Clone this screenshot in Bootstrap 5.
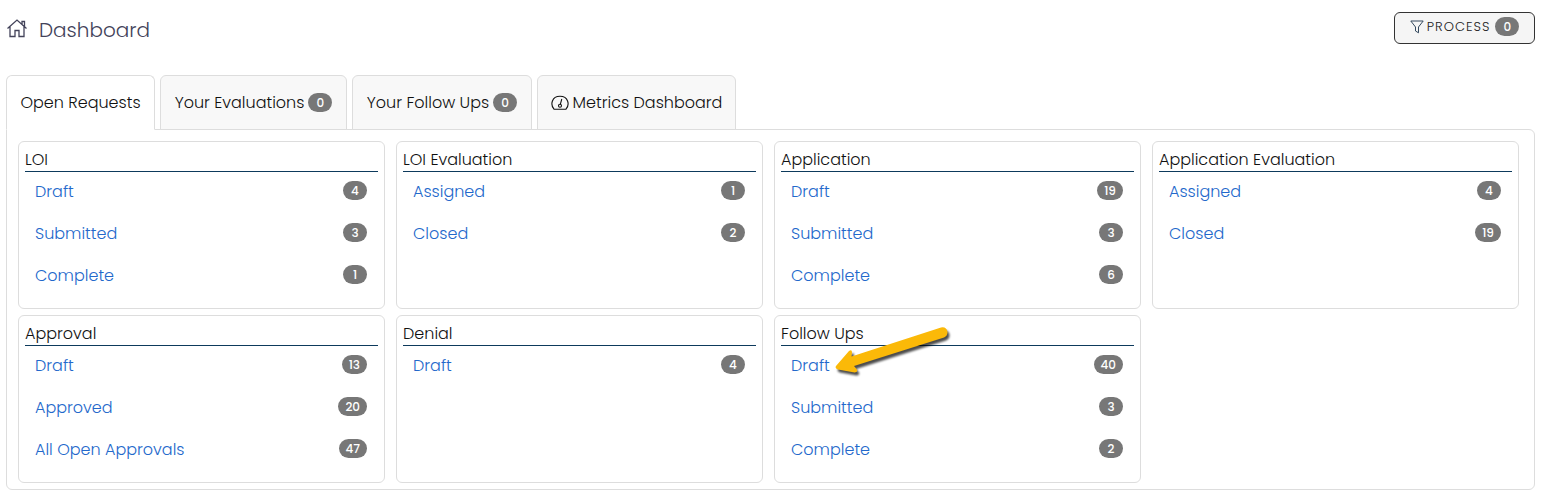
<!DOCTYPE html>
<html lang="en">
<head>
<meta charset="utf-8">
<meta name="viewport" content="width=device-width, initial-scale=1">
<title>Dashboard</title>
<link href="https://cdn.jsdelivr.net/npm/bootstrap@5.3.0/dist/css/bootstrap.min.css" rel="stylesheet">
<style>
  body { font-family: Poppins, Inter, "Open Sans", sans-serif; font-size: 16px; font-weight: 300; line-height: 24px; color: #111; background: #fff; }
  .page { padding: 12px 12px 9px 6px; }
  .page-head { height: 32px; margin-bottom: 31px; }
  .page-title { font-size: 20px; line-height: 32px; font-weight: 300; color: #43435a; padding: 2px 0 0 3px; }
  .count { min-width: 24px; padding: 0 7px; border-radius: 10px; background: #777; color: #fff; font-size: 12px; line-height: 19px; font-weight: 500; text-align: center; }
  .btn-process { height: 32px; width: 141px; padding: 0 0 3px; border: 1px solid #333; border-radius: 6px; background: #f5f5f5; color: #222; font-size: 13px; font-weight: 300; letter-spacing: 1px; line-height: 20px; }
  .btn-process svg { margin-right: 3px; }
  .btn-process .count { letter-spacing: 0; margin-left: 5px; }
  .request-tabs { border: 0; gap: 5px; }
  .request-tabs .nav-link { height: 55px; padding: 0 8px; border: 1px solid #ddd; border-radius: 6px 6px 0 0; background: #f8f8f8; color: #111; margin-bottom: -1px; }
  .request-tabs .nav-link.active { background: #fff; border-color: #ddd #ddd #fff; color: #111; }
  .tab-short { min-width: 149px; }
  .tab-mid { min-width: 180px; }
  .tab-long { min-width: 187px; }
  .tab-wide { min-width: 199px; }
  .panel { border: 1px solid #ddd; border-radius: 0 6px 6px 6px; padding: 11px 15px 6px 11px; }
  .panel .row { --bs-gutter-x: 11px; --bs-gutter-y: 6px; }
  .stage { height: 168px; border: 1px solid #ddd; border-radius: 6px; padding: 6px; }
  .stage h2 { margin: 0; font-size: 16px; font-weight: 300; line-height: 23px; border-bottom: 1px solid #0d3a5c; }
  .stage ul { padding: 0 11px 0 10px; margin: 0; }
  .stage li { height: 42px; padding-top: 8px; }
  .stage a { color: #2368cb; text-decoration: none; }
  .stage .count { margin-top: 1px; }
  .pointer { position: absolute; left: 39px; top: -24px; pointer-events: none; }
</style>
</head>
<body>
<main class="page">
  <header class="page-head d-flex justify-content-between align-items-start">
    <div class="d-flex align-items-center">
      <svg width="22" height="22" viewBox="0 0 22 22" class="me-2" fill="none" stroke="#43435a" stroke-width="1.300" aria-hidden="true"><path d="M1.500 10.500 11 2l9.500 8.500M4 8.500V18.500h5v-6h4v6h5V8.500M16 6.300V3.500h2.500v5"/></svg>
      <h1 class="page-title m-0">Dashboard</h1>
    </div>
    <button type="button" class="btn btn-process d-flex align-items-center justify-content-center">
      <svg width="14" height="14" viewBox="0 0 14 14" fill="none" stroke="#34495e" aria-hidden="true"><path d="M.8 1h12.400L8.500 7v5.800L5.500 11V7z"/></svg>
      <span>PROCESS</span><span class="count">0</span>
    </button>
  </header>

  <ul class="nav nav-tabs request-tabs">
    <li class="nav-item tab-short"><a href="#" class="nav-link active d-flex align-items-center justify-content-center" aria-current="page">Open Requests</a></li>
    <li class="nav-item tab-long"><a href="#" class="nav-link d-flex align-items-center justify-content-center gap-1">Your Evaluations <span class="count">0</span></a></li>
    <li class="nav-item tab-mid"><a href="#" class="nav-link d-flex align-items-center justify-content-center gap-1">Your Follow Ups <span class="count">0</span></a></li>
    <li class="nav-item tab-wide"><a href="#" class="nav-link d-flex align-items-center justify-content-center gap-1"><svg width="18" height="16" viewBox="0 0 18 16" fill="none" stroke="#111" stroke-width="1.100" aria-hidden="true"><path d="M3 14.200C-1 9.500.8 1.200 9 1.200S19 9.500 15 14.200zM9.300 9.300l1.500-5.300"/><circle cx="9" cy="10.800" r="1.500"/></svg>Metrics Dashboard</a></li>
  </ul>

  <section class="panel">
    <div class="row row-cols-4">
      <div class="col"><div class="stage"><h2>LOI</h2><ul class="list-unstyled">
        <li class="d-flex justify-content-between align-items-start"><a href="#">Draft</a><span class="count">4</span></li>
        <li class="d-flex justify-content-between align-items-start"><a href="#">Submitted</a><span class="count">3</span></li>
        <li class="d-flex justify-content-between align-items-start"><a href="#">Complete</a><span class="count">1</span></li></ul></div></div>
      <div class="col"><div class="stage"><h2>LOI Evaluation</h2><ul class="list-unstyled">
        <li class="d-flex justify-content-between align-items-start"><a href="#">Assigned</a><span class="count">1</span></li>
        <li class="d-flex justify-content-between align-items-start"><a href="#">Closed</a><span class="count">2</span></li></ul></div></div>
      <div class="col"><div class="stage"><h2>Application</h2><ul class="list-unstyled">
        <li class="d-flex justify-content-between align-items-start"><a href="#">Draft</a><span class="count">19</span></li>
        <li class="d-flex justify-content-between align-items-start"><a href="#">Submitted</a><span class="count">3</span></li>
        <li class="d-flex justify-content-between align-items-start"><a href="#">Complete</a><span class="count">6</span></li></ul></div></div>
      <div class="col"><div class="stage"><h2>Application Evaluation</h2><ul class="list-unstyled">
        <li class="d-flex justify-content-between align-items-start"><a href="#">Assigned</a><span class="count">4</span></li>
        <li class="d-flex justify-content-between align-items-start"><a href="#">Closed</a><span class="count">19</span></li></ul></div></div>
      <div class="col"><div class="stage"><h2>Approval</h2><ul class="list-unstyled">
        <li class="d-flex justify-content-between align-items-start"><a href="#">Draft</a><span class="count">13</span></li>
        <li class="d-flex justify-content-between align-items-start"><a href="#">Approved</a><span class="count">20</span></li>
        <li class="d-flex justify-content-between align-items-start"><a href="#">All Open Approvals</a><span class="count">47</span></li></ul></div></div>
      <div class="col"><div class="stage"><h2>Denial</h2><ul class="list-unstyled">
        <li class="d-flex justify-content-between align-items-start"><a href="#">Draft</a><span class="count">4</span></li></ul></div></div>
      <div class="col"><div class="stage"><h2>Follow Ups</h2><ul class="list-unstyled">
        <li class="d-flex justify-content-between align-items-start position-relative"><a href="#">Draft</a><span class="count">40</span>
          <svg class="pointer" width="124" height="60" viewBox="0 0 124 60" aria-hidden="true"><path d="M6 44 19 29q3-2 3 1.500l-.5 4L111 5.500q5.500-1 6.500 4.500 0 4-3.500 5.500L24 44l3 3.500q1 3-2.500 3L8 47.500q-3.500-1-2-3.500z" fill="#fbb908" style="filter:drop-shadow(2px 3px 1px rgba(0,0,0,.7))"/></svg></li>
        <li class="d-flex justify-content-between align-items-start"><a href="#">Submitted</a><span class="count">3</span></li>
        <li class="d-flex justify-content-between align-items-start"><a href="#">Complete</a><span class="count">2</span></li></ul></div></div>
    </div>
  </section>
</main>
<script src="https://cdn.jsdelivr.net/npm/bootstrap@5.3.0/dist/js/bootstrap.bundle.min.js"></script>
</body>
</html>
